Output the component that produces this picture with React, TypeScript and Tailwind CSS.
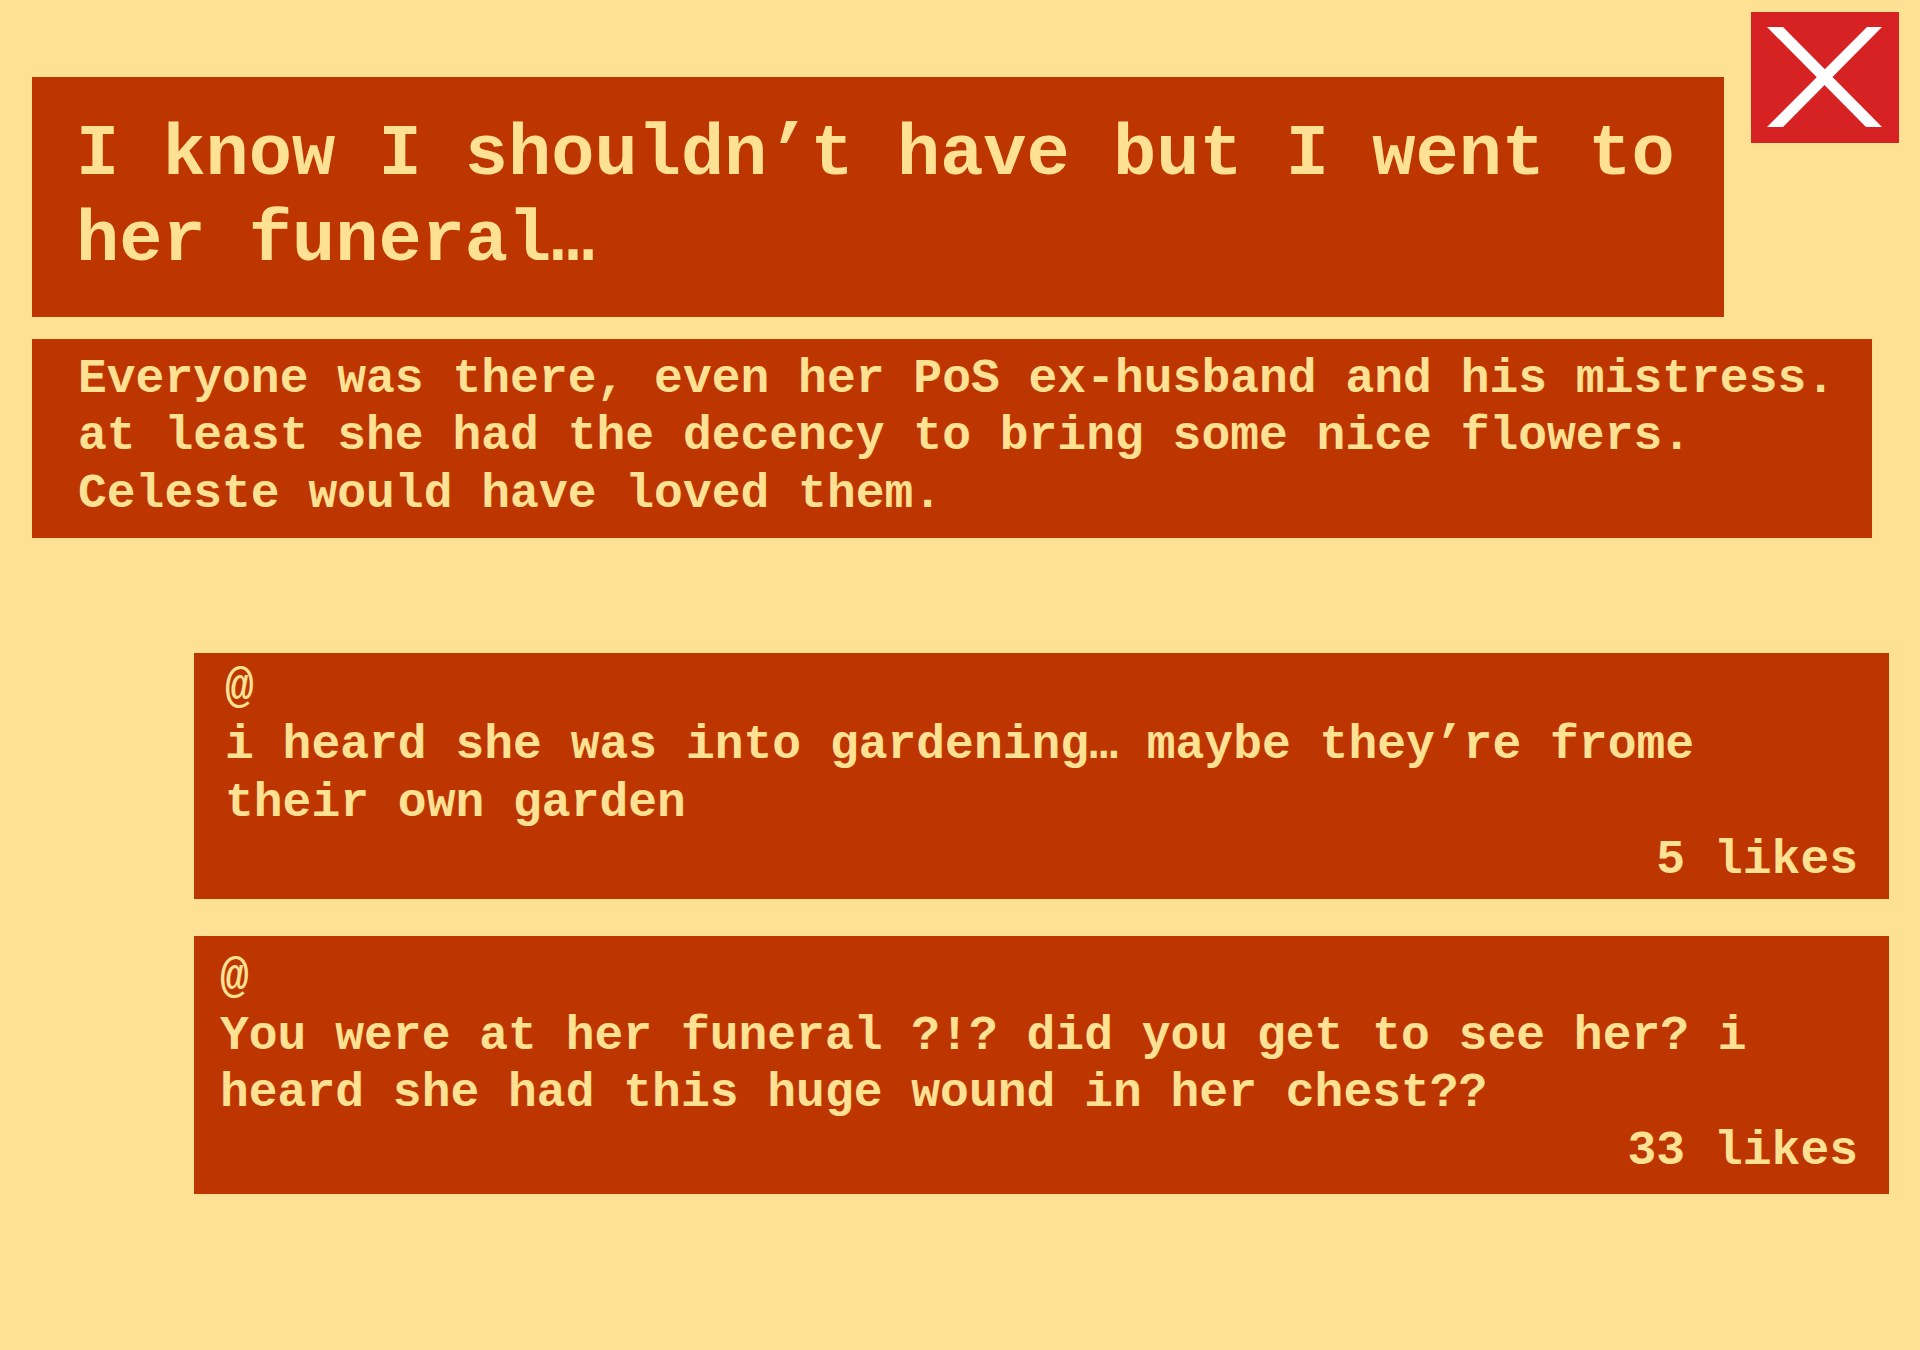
const comments = [
  {
    id: 1,
    lines: ['i heard she was into gardening… maybe they’re frome', 'their own garden'],
    likes: 5,
    pad: 'mt-[115px] pl-[31px] pr-[31px] pt-[7px] pb-[9px]',
  },
  {
    id: 2,
    lines: ['You were at her funeral ?!? did you get to see her? i', 'heard she had this huge wound in her chest??'],
    likes: 33,
    pad: 'mt-[37px] pl-[26px] pr-[31px] pt-[14px] pb-[14px]',
  },
];

function CloseButton() {
  return (
    <button className="ml-[27px] h-[131px] w-[148px] shrink-0 bg-[#D62222]" aria-label="close">
      <svg width="148" height="131" viewBox="0 0 148 131">
        <polygon points="16,15 32,15 131,115 115,115" fill="#fff" />
        <polygon points="116,15 131,15 32,115 16,115" fill="#fff" />
      </svg>
    </button>
  );
}

export default function App() {
  return (
    <div className="h-[1350px] w-full bg-[#FFE194] font-['Liberation_Mono',monospace] font-bold text-[#FFE194]">
      {/* Post header */}
      <div className="flex items-start pl-8 pr-[21px] pt-3">
        <h1 className="mt-[65px] flex-1 bg-[#BD3500] pb-[32px] pl-[44px] pr-4 pt-[35px] text-[72px] leading-[1.2]">
          I know I shouldn’t have but I went to her funeral…
        </h1>
        <CloseButton />
      </div>

      {/* Post body */}
      <div className="ml-8 mr-[48px] mt-[22px] bg-[#BD3500] pb-[14px] pl-[46px] pr-4 pt-[12px] text-[48px] leading-[1.2]">
        <p>Everyone was there, even her PoS ex-husband and his mistress.</p>
        <p>at least she had the decency to bring some nice flowers.</p>
        <p>Celeste would have loved them.</p>
      </div>

      {/* Comments */}
      {comments.map((c) => (
        <div key={c.id} className={`ml-[194px] mr-[31px] bg-[#BD3500] text-[48px] leading-[1.2] ${c.pad}`}>
          <p>@</p>
          {c.lines.map((l) => (
            <p key={l}>{l}</p>
          ))}
          <p className="text-right">{c.likes} likes</p>
        </div>
      ))}
    </div>
  );
}
